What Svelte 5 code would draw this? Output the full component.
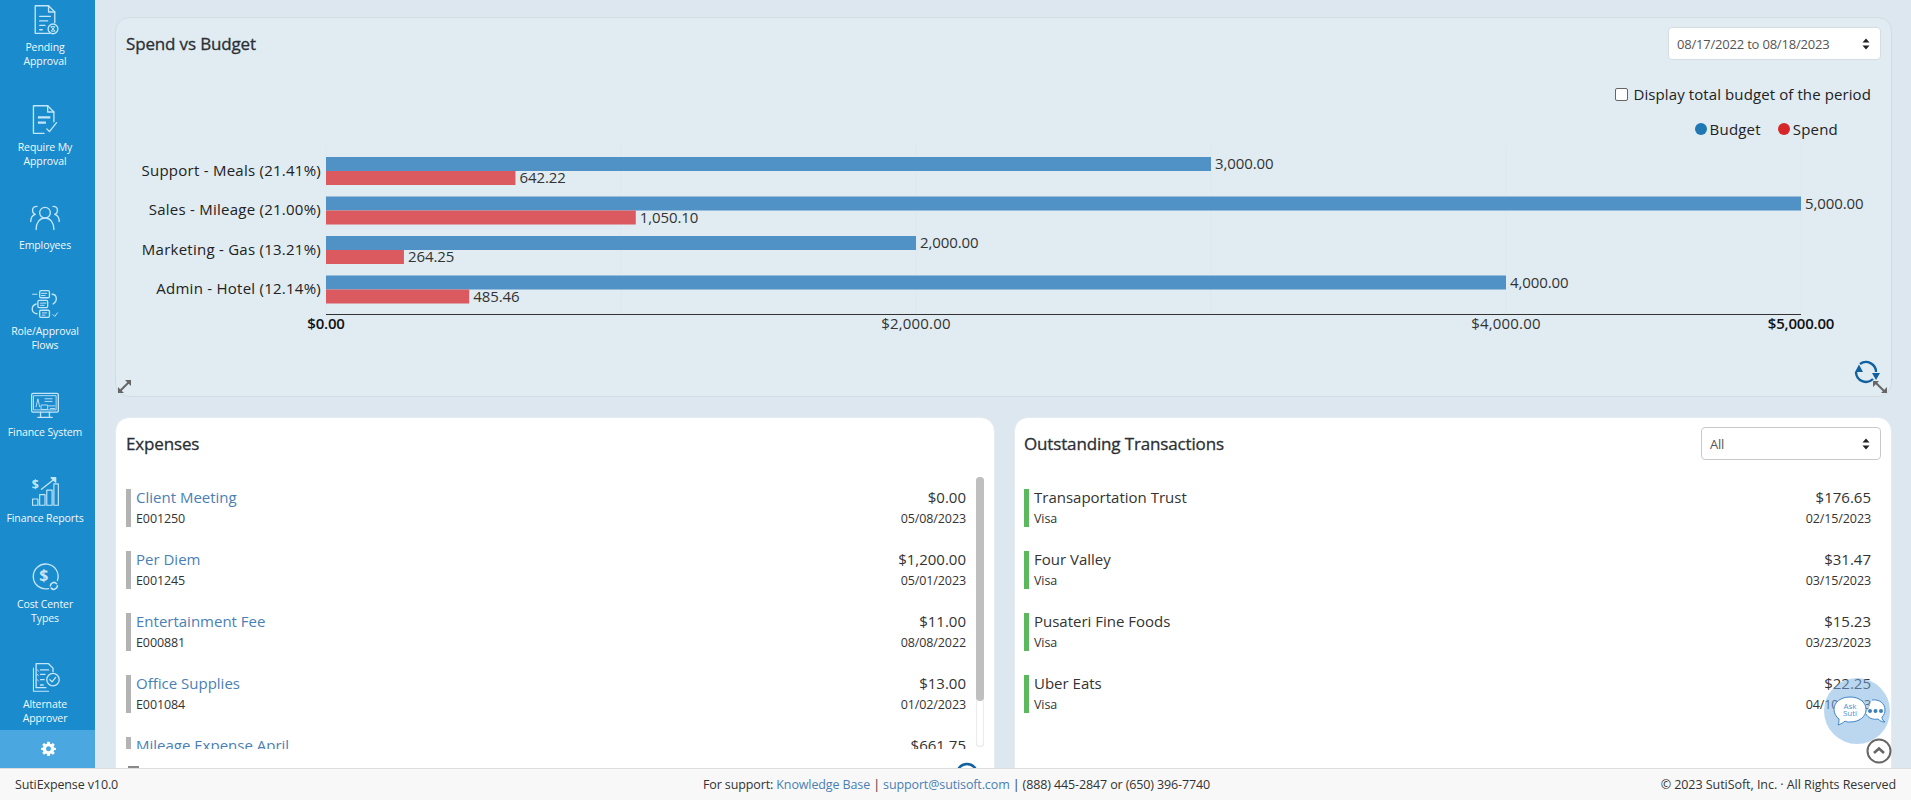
<script>
  const nav = [
    { key: 'pending', lines: ['Pending', 'Approval'], h: 100 },
    { key: 'require', lines: ['Require My', 'Approval'], h: 98 },
    { key: 'employees', lines: ['Employees'], h: 86 },
    { key: 'role', lines: ['Role/Approval', 'Flows'], h: 101 },
    { key: 'system', lines: ['Finance System'], h: 86 },
    { key: 'reports', lines: ['Finance Reports'], h: 86 },
    { key: 'cost', lines: ['Cost Center', 'Types'], h: 100 },
    { key: 'alt', lines: ['Alternate', 'Approver'], h: 73 }
  ];
  const x0 = 326;
  const k = 0.295;
  const rows = [
    { label: 'Support - Meals (21.41%)', budget: 3000, bl: '3,000.00', spend: 642.22, sl: '642.22', y: 157 },
    { label: 'Sales - Mileage (21.00%)', budget: 5000, bl: '5,000.00', spend: 1050.1, sl: '1,050.10', y: 196.5 },
    { label: 'Marketing - Gas (13.21%)', budget: 2000, bl: '2,000.00', spend: 264.25, sl: '264.25', y: 236 },
    { label: 'Admin - Hotel (12.14%)', budget: 4000, bl: '4,000.00', spend: 485.46, sl: '485.46', y: 275.5 }
  ];
  const ticks = [
    { x: 326, t: '$0.00', b: true },
    { x: 916, t: '$2,000.00' },
    { x: 1506, t: '$4,000.00' },
    { x: 1801, t: '$5,000.00', b: true }
  ];
  const expenses = [
    { t: 'Client Meeting', s: 'E001250', a: '$0.00', d: '05/08/2023' },
    { t: 'Per Diem', s: 'E001245', a: '$1,200.00', d: '05/01/2023' },
    { t: 'Entertainment Fee', s: 'E000881', a: '$11.00', d: '08/08/2022' },
    { t: 'Office Supplies', s: 'E001084', a: '$13.00', d: '01/02/2023' },
    { t: 'Mileage Expense April', s: 'E001080', a: '$661.75', d: '04/28/2023' }
  ];
  const outstanding = [
    { t: 'Transaportation Trust', s: 'Visa', a: '$176.65', d: '02/15/2023' },
    { t: 'Four Valley', s: 'Visa', a: '$31.47', d: '03/15/2023' },
    { t: 'Pusateri Fine Foods', s: 'Visa', a: '$15.23', d: '03/23/2023' },
    { t: 'Uber Eats', s: 'Visa', a: '$22.25', d: '04/10/2023' }
  ];
</script>

<div class="page">
  <div class="body">
    <aside class="side">
      <div class="nav">
        {#each nav as n}
          <div class="item" style="height:{n.h}px">
            <svg class="ico" viewBox="0 0 36 36" width="32" height="32" fill="none" stroke="currentColor" stroke-width="1.5" stroke-linecap="round" stroke-linejoin="round">
              {#if n.key === 'pending'}
                <path d="M23 33H7V2h15l7 7v12" /><path d="M22 2v7h7" />
                <path d="M12 14h12M12 19h9M12 24h6M12 29h3" />
                <circle cx="27" cy="28" r="5.500" /><path d="M25 25.500h4l-4 5h4z" stroke-width="1.1" />
              {:else if n.key === 'require'}
                <path d="M17 33H5V2h16l7 7v11" /><path d="M21 2v7h7" />
                <path d="M10 15h14M10 21h9" stroke-width="2.600" stroke-linecap="butt" />
                <path d="M20 28l3 3 8-10" />
              {:else if n.key === 'employees'}
                <circle cx="18" cy="12" r="6" /><path d="M8 31c0-8 4-13 10-13s10 5 10 13" />
                <path d="M9 5c-3 0-5 2-5 4.500 0 2 1 3.500 3 4.500-3 1-5 4-5 8" /><path d="M27 5c3 0 5 2 5 4.500 0 2-1 3.500-3 4.500 3 1 5 4 5 8" />
              {:else if n.key === 'role'}
                <rect x="12" y="3" width="11" height="8" rx="1.500" /><rect x="10" y="14" width="11" height="8" rx="1.500" /><rect x="12" y="25" width="11" height="8" rx="1.500" />
                <path d="M4 7h5M14 6h6M14 8.500h4M13 17h6M13 19.500h4M15 28h5M15 30.500h3" stroke-width="1.100" />
                <path d="M26 7c5 0 7 7 1 11" /><path d="M8 18c-6 2-6 10 1 11" /><path d="M27 30l2 2 3-4" stroke-width="1.100" />
              {:else if n.key === 'system'}
                <rect x="3" y="5" width="30" height="21" rx="1.500" /><rect x="5.500" y="7.500" width="25" height="16" stroke-width="1" />
                <path d="M13 26v5M23 26v5M10 32h16" />
                <path d="M8 20l2-9 2 9M18 11h8M18 14h8M22 19h7M24 22h5" stroke-width="1" /><rect x="14" y="18" width="7" height="5" stroke-width="1" />
              {:else if n.key === 'reports'}
                <path d="M4 34v-7h6v7zM12 34V22h6v12zM20 34V17h6v17zM28 34V10h5v24z" stroke-width="1.300" />
                <path d="M14 16 L28 5" stroke-width="1.500" /><path d="M25 3h5v5z" fill="currentColor" />
                <text x="3" y="16" class="dollar" fill="currentColor" stroke="none">$</text>
              {:else if n.key === 'cost'}
                <path d="M22 31a14 14 0 1 1 10-9" /><text x="11.500" y="23" class="dollar big" fill="currentColor" stroke="none">$</text>
                <path d="M24 28a4 4 0 0 1 7-2.500M32 28a4 4 0 0 1-7 2.500" stroke-width="1.800" />
              {:else}
                <path d="M5 8v26h17" stroke-width="1.200" /><path d="M8 3h14l5 5v4M8 3v27h11" />
                <path d="M13 10h9M13 15h5M13 21h4M13 27h3" /><path d="M9.500 10l1.500 1.500M9.500 15l1 1.500M9.500 21l1 1.500" stroke-width="1" />
                <circle cx="27" cy="21" r="7" /><path d="M23.500 21l2.500 2.500 4-5" />
              {/if}
            </svg>
            <div class="lab">{#each n.lines as l}<div>{l}</div>{/each}</div>
          </div>
        {/each}
      </div>
      <div class="gear">
        <svg viewBox="0 0 24 24" width="15" height="15" fill="#fff"><path fill-rule="evenodd" d="M10 1h4l.6 3.200 1.800.8L19 3l3 3-2 2.600.8 1.900L24 11v3l-3.200.6-.8 1.800L22 19l-3 3-2.600-2-1.800.8L14 24h-4l-.6-3.200-1.800-.8L5 22l-3-3 2-2.600-.8-1.800L0 14v-3l3.200-.5.8-1.900L2 6l3-3 2.600 2 1.800-.8zM12 8.500a4 4 0 1 0 .01 0z"/></svg>
      </div>
    </aside>

    <main class="main">
      <section class="card chart">
        <div class="head">
          <h2>Spend vs Budget</h2>
          <div class="select date"><span>08/17/2022 to 08/18/2023</span>
            <svg viewBox="0 0 8 12" width="8" height="12" fill="#222"><path d="M4 0.500l3.500 4h-7zM4 11.500l-3.500-4h7z"/></svg>
          </div>
        </div>
        <label class="check"><span class="box"></span>Display total budget of the period</label>
        <div class="legend">
          <span class="lg"><i class="dot blue"></i>Budget</span>
          <span class="lg"><i class="dot red"></i>Spend</span>
        </div>
        <svg class="plot" viewBox="116 145 1775 250" width="1775" height="250">
          {#each [326, 621, 916, 1211, 1506, 1801] as gx}
            <line x1={gx} x2={gx} y1="145" y2="314" stroke="#dde7ee" stroke-width="1" />
          {/each}
          {#each rows as r}
            <rect x={x0} y={r.y} width={r.budget * k} height="14" fill="#5092c5" />
            <rect x={x0} y={r.y + 14} width={r.spend * k} height="14" fill="#da5a60" />
            <text x="321" y={r.y + 18.5} text-anchor="end" class="rl">{r.label}</text>
            <text x={x0 + r.budget * k + 4} y={r.y + 12} class="vl">{r.bl}</text>
            <text x={x0 + r.spend * k + 4} y={r.y + 26} class="vl">{r.sl}</text>
          {/each}
          <line x1="326" x2="1801" y1="314.500" y2="314.500" stroke="#333" stroke-width="1" />
          {#each ticks as t}
            <text x={t.x} y="329" text-anchor="middle" class="tk" class:bold={t.b}>{t.t}</text>
          {/each}
          <g fill="none" stroke="#666" stroke-width="2">
            <path d="M120 391l9-9" /><path d="M1876 383l8 8" />
          </g>
          <g fill="#666">
            <path d="M118 393v-6l6 6zM131 380v6l-6-6z" />
            <path d="M1873 381h6l-6 6zM1887 393h-6l6-6z" />
          </g>
          <g fill="none" stroke="#13609f" stroke-width="2.400">
            <path d="M1860 364a10 10 0 0 1 16 8" /><path d="M1873 379a10 10 0 0 1-17-7" />
          </g>
          <path d="M1855 372l4-7.500 4 7.500zM1872 373h8l-4 7z" fill="#13609f" />
        </svg>
      </section>

      <div class="grid">
        <section class="card panel">
          <div class="head"><h2>Expenses</h2></div>
          <div class="list-wrap">
            <ul class="list">
              {#each expenses as e}
                <li class="row">
                  <div class="l grey"><div class="t link">{e.t}</div><div class="s">{e.s}</div></div>
                  <div class="r"><div class="t">{e.a}</div><div class="s">{e.d}</div></div>
                </li>
              {/each}
            </ul>
            <div class="track"><div class="thumb"></div></div>
          </div>
          <span class="stub"></span>
          <div class="foot">
            <svg width="24" height="24" viewBox="0 0 24 24" fill="none" stroke="#13609f" stroke-width="2.400"><circle cx="12" cy="12" r="10" /></svg>
          </div>
        </section>

        <section class="card panel out">
          <div class="head"><h2>Outstanding Transactions</h2>
            <div class="select all"><span>All</span>
              <svg viewBox="0 0 8 12" width="8" height="12" fill="#222"><path d="M4 0.500l3.500 4h-7zM4 11.500l-3.500-4h7z"/></svg>
            </div>
          </div>
          <div class="list-wrap">
            <ul class="list">
              {#each outstanding as e}
                <li class="row">
                  <div class="l green"><div class="t">{e.t}</div><div class="s">{e.s}</div></div>
                  <div class="r"><div class="t">{e.a}</div><div class="s">{e.d}</div></div>
                </li>
              {/each}
            </ul>
          </div>
        </section>
      </div>
    </main>
  </div>

  <footer class="footer">
    <span>SutiExpense v10.0</span>
    <span>For support: <a href="#kb">Knowledge Base</a> | <a href="#mail">support@sutisoft.com</a> | (888) 445-2847 or (650) 396-7740</span>
    <span class="copy">© 2023 SutiSoft, Inc. · All Rights Reserved</span>
  </footer>

  <div class="ask">
    <svg viewBox="0 0 66 66" width="66" height="66">
      <path d="M48 22c7-1 13 3 13 10 0 3-1 5-3 7 0 2 1 4 3 5-3 0-5-1-7-3-5 1-10-1-12-5" fill="#fff" stroke="#3f86c4" stroke-width="1" />
      <path d="M26 19c9 0 16 5 16 12.500S35 44 26 44c-2 0-4 0-5-1-2 2-4 3-7 4 1-2 1-4 1-6-3-2-5-6-5-9.500C10 24 17 19 26 19z" fill="#fff" stroke="#3f86c4" stroke-width="1" />
      <text x="26" y="31" class="ask-t">Ask</text>
      <text x="26" y="38" class="ask-t">Suti</text>
      <circle cx="46" cy="33" r="2" fill="#3f7fb8" /><circle cx="51.500" cy="33" r="2" fill="#3f7fb8" /><circle cx="57" cy="33" r="2" fill="#3f7fb8" />
    </svg>
  </div>
  <div class="up">
    <svg viewBox="0 0 26 26" width="26" height="26" fill="none" stroke="#666" stroke-width="2"><circle cx="13" cy="13" r="11.500" /><path d="M8 15l5-4.500 5 4.500" stroke-width="2.600" /></svg>
  </div>
</div>

<style>
  :global(body) {
    margin: 0;
    font-family: "Open Sans", "Noto Sans", sans-serif;
    color: #222;
    background: #dce7ef;
  }
  .page {
    width: 1911px;
    height: 800px;
    position: relative;
    overflow: hidden;
    display: flex;
    flex-direction: column;
  }
  .body {
    flex: 1;
    min-height: 0;
    display: flex;
    overflow: hidden;
  }
  .side {
    width: 95px;
    flex: none;
    background: #1a8bcd;
    display: flex;
    flex-direction: column;
    overflow: hidden;
  }
  .nav {
    flex: 1;
    min-height: 0;
  }
  .item {
    box-sizing: border-box;
    padding: 4px 5px 0 0;
    display: flex;
    flex-direction: column;
    align-items: center;
    color: #c4e6f9;
  }
  .ico {
    flex: none;
  }
  .lab {
    margin-top: 4px;
    font-size: 10.500px;
    line-height: 14px;
    letter-spacing: -0.1px;
    color: #f2f9fd;
    text-align: center;
    white-space: nowrap;
  }
  .dollar {
    font: 700 14px "Open Sans", sans-serif;
  }
  .dollar.big {
    font-size: 18px;
  }
  .gear {
    height: 38px;
    flex: none;
    background: #4aa7df;
    display: flex;
    align-items: flex-start;
    padding: 11px 0 0 2px;
    box-sizing: border-box;
    justify-content: center;
  }
  .main {
    flex: 1;
    min-width: 0;
    padding: 17px 19px 0 20px;
    overflow: hidden;
  }
  .card {
    box-sizing: border-box;
    border-radius: 14px;
    border: 1px solid #d3dce3;
  }
  .chart {
    height: 380px;
    background: #e0ebf2;
    position: relative;
  }
  .head {
    display: flex;
    justify-content: space-between;
    align-items: center;
    padding: 9px 10px 0 10px;
    height: 33px;
  }
  .out .head {
    padding-left: 9px;
  }
  h2 {
    margin: 0;
    font-size: 17px;
    font-weight: 400;
    -webkit-text-stroke: 0.3px #2b2f33;
    letter-spacing: -0.15px;
    color: #2b2f33;
  }
  .select {
    box-sizing: border-box;
    height: 33px;
    background: #fff;
    border: 1px solid #d5dde3;
    border-radius: 4px;
    display: flex;
    align-items: center;
    justify-content: space-between;
    padding: 0 10px 0 8px;
    font-size: 13px;
    letter-spacing: -0.2px;
    color: #555;
  }
  .date {
    width: 213px;
  }
  .all {
    width: 180px;
    border-color: #c9c9c9;
  }
  .check {
    display: flex;
    align-items: center;
    justify-content: flex-end;
    gap: 5px;
    margin-top: 24px;
    padding-right: 20px;
    font-size: 15px;
    letter-spacing: 0.1px;
    line-height: 20px;
    color: #222;
  }
  .box {
    width: 11px;
    height: 11px;
    border: 1px solid #666;
    border-radius: 2px;
    background: #fff;
  }
  .legend {
    display: flex;
    justify-content: flex-end;
    gap: 17px;
    margin-top: 15px;
    padding-right: 53px;
    font-size: 15px;
    letter-spacing: 0.2px;
    line-height: 20px;
  }
  .lg {
    display: flex;
    align-items: center;
    gap: 3px;
  }
  .dot {
    width: 12px;
    height: 12px;
    border-radius: 50%;
  }
  .blue { background: #1f77b4; }
  .red { background: #d62728; }
  .plot {
    display: block;
    position: absolute;
    left: 0;
    top: 127px;
    overflow: visible;
  }
  .rl {
    font-size: 15px;
    letter-spacing: 0.25px;
    fill: #222;
  }
  .vl {
    font-size: 15px;
    letter-spacing: -0.1px;
    fill: #333;
  }
  .tk {
    font-size: 15px;
    letter-spacing: 0.2px;
    fill: #333;
  }
  .tk.bold {
    font-weight: 600;
    letter-spacing: -0.2px;
    fill: #111;
  }
  .grid {
    display: grid;
    grid-template-columns: 880px 878px;
    gap: 19px;
    margin-top: 20px;
  }
  .panel {
    height: 420px;
    background: #fff;
    border-color: #e6ebef;
    overflow: hidden;
    position: relative;
  }
  .list-wrap {
    position: relative;
    height: 272px;
    margin-top: 17px;
    overflow: hidden;
  }
  .list {
    list-style: none;
    margin: 0;
    padding: 12px 28px 0 10px;
  }
  .out .list {
    padding: 12px 20px 0 9px;
  }
  .row {
    display: flex;
    justify-content: space-between;
    height: 38px;
    margin: 0 0 24px;
  }
  .l {
    border-left: 5px solid #b3b3b3;
    padding-left: 5px;
  }
  .l.green {
    border-left-color: #5cb85c;
  }
  .t {
    font-size: 15px;
    line-height: 17px;
    letter-spacing: 0;
    color: #333;
    white-space: nowrap;
  }
  .link {
    color: #4a7fb5;
  }
  .s {
    margin-top: 5px;
    font-size: 12.500px;
    line-height: 16px;
    letter-spacing: -0.1px;
    color: #333;
  }
  .r {
    text-align: right;
  }
  .track {
    position: absolute;
    top: 0;
    right: 10px;
    width: 8px;
    height: 270px;
    border-radius: 4px;
    box-shadow: inset 0 0 2px #bbb;
    background: #fff;
  }
  .thumb {
    height: 224px;
    border-radius: 4px;
    background: #bfbfbf;
  }
  .stub {
    position: absolute;
    left: 12px;
    top: 348px;
    width: 11px;
    height: 3px;
    background: #8a8a8a;
  }
  .foot {
    position: absolute;
    top: 344px;
    right: 15px;
    line-height: 0;
  }
  .footer {
    height: 32px;
    flex: none;
    box-sizing: border-box;
    border-top: 1px solid #ddd;
    background: #f8f8f8;
    position: relative;
    z-index: 1;
    display: grid;
    grid-template-columns: 688px auto 1fr;
    align-items: center;
    padding: 0 15px;
    font-size: 12.500px;
    letter-spacing: -0.12px;
    color: #333;
  }
  .copy {
    text-align: right;
    letter-spacing: -0.05px;
  }
  .footer a {
    color: #4a7fb5;
    text-decoration: none;
  }
  .ask {
    position: absolute;
    left: 1824px;
    top: 678px;
    width: 66px;
    height: 66px;
    border-radius: 50%;
    background: rgba(120, 175, 225, 0.5);
    line-height: 0;
    z-index: 2;
  }
  .ask-t {
    font-size: 8px;
    text-anchor: middle;
    fill: #4f93d0;
  }
  .up {
    position: absolute;
    left: 1866px;
    top: 738px;
    line-height: 0;
    z-index: 2;
  }
</style>
